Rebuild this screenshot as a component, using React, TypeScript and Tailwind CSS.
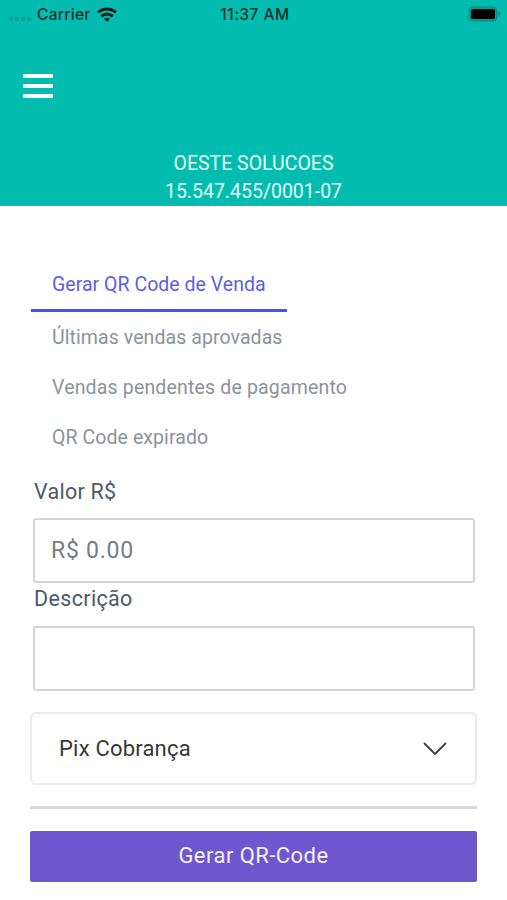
import React, { useState } from 'react';

const TABS = [
  { label: 'Gerar QR Code de Venda', tracking: 'tracking-[0.03px]' },
  { label: 'Últimas vendas aprovadas', tracking: 'tracking-[0.08px]' },
  { label: 'Vendas pendentes de pagamento', tracking: 'tracking-[0.17px]' },
  { label: 'QR Code expirado', tracking: 'tracking-[0.08px]' },
];

const StatusBar: React.FC = () => (
  <div className="grid h-7 grid-cols-[1fr_auto_1fr] items-center pl-[9px] pr-[6px] pt-px font-['Inter',sans-serif] text-[15.5px] text-[#06312e]">
    <div className="flex items-center">
      <div className="mr-[6px] mt-[9px] flex gap-[2px]">
        {[...Array(4)].map((_, i) => (
          <span key={i} className="h-1 w-1 rounded-full bg-[#079c91]" />
        ))}
      </div>
      <span className="font-medium tracking-[0.3px]">Carrier</span>
      <svg className="ml-[6px] h-[15px] w-5" viewBox="0 0 20 15" fill="none" stroke="#032220" strokeWidth="3">
        <path d="M1 5.4C6 .7 14 .7 19 5.4" />
        <path d="M4.3 9.300C7.500 6.200 12.500 6.200 15.700 9.300" />
        <path d="M10 14.800 7 12Q10 9.400 13 12Z" fill="#032220" stroke="none" />
      </svg>
    </div>
    <span className="font-medium tracking-[0.5px]">11:37 AM</span>
    <svg className="h-[17px] w-[33px] justify-self-end" viewBox="0 0 33 17">
      <rect x="1" y="1" width="28" height="14" rx="4" fill="#079b90" stroke="#078b81" />
      <rect x="3" y="3" width="24" height="10" rx="2" fill="#000" />
      <path d="M30.500 5.500v5q2-.8 2-2.500t-2-2.500z" fill="#078b81" />
    </svg>
  </div>
);

const App: React.FC = () => {
  const [active, setActive] = useState(0);

  return (
    <div className="flex h-[900px] w-[507px] flex-col overflow-hidden bg-white font-['Roboto',sans-serif]">
      <header className="h-[206px] shrink-0 bg-[#02bdaf]">
        <StatusBar />
        <button aria-label="Menu" className="ml-[23px] mt-[46px] flex w-[30px] flex-col gap-[6px]">
          <span className="h-1 w-full rounded-[1px] bg-white" />
          <span className="h-1 w-full rounded-[1px] bg-white" />
          <span className="h-1 w-full rounded-[1px] bg-white" />
        </button>
        <div className="mt-[52px] text-center text-[19.5px] leading-[28px] text-[#e4fffb]">
          <p>OESTE SOLUCOES</p>
          <p>15.547.455/0001-07</p>
        </div>
      </header>

      <main className="px-[30px] pt-[52px]">
        <nav className="flex flex-col items-start">
          {TABS.map((tab, i) => (
            <button
              key={tab.label}
              onClick={() => setActive(i)}
              className={`whitespace-nowrap text-left text-[19.5px] ${tab.tracking} ${
                i === active
                  ? 'ml-px h-[54px] w-[256px] border-b-[3px] border-[#4b51e0] pl-[21px] pt-[3px] text-[#5a5fe6]'
                  : 'h-[50px] pl-[22px] pt-[2px] text-[#8b939c]'
              }`}
            >
              {tab.label}
            </button>
          ))}
        </nav>

        <form className="pt-[14px]" onSubmit={(e) => e.preventDefault()}>
          <div className="px-[3px] text-[21.5px] text-[#4b5b69]">
            <label htmlFor="valor" className="flex h-[42px] items-center pb-[10px] pl-px tracking-[0.25px]">Valor R$</label>
            <input
              id="valor"
              placeholder="R$ 0.00"
              className="block h-[65px] w-[442px] rounded-[3px] border-2 border-[#d5d5d5] pl-4 text-[23px] tracking-[0.75px] outline-none placeholder:text-[#777c80]"
            />
            <label htmlFor="descricao" className="flex h-[43px] items-center pb-[10px] pl-px tracking-[0.35px]">Descrição</label>
            <input
              id="descricao"
              className="block h-[65px] w-[442px] rounded-[3px] border-2 border-[#d5d5d5] pl-4 text-[23px] tracking-[0.75px] outline-none"
            />
          </div>

          <button
            type="button"
            className="mt-[21px] flex h-[73px] w-[447px] items-center justify-between rounded-[6px] border-2 border-[#ebebeb] pl-[27px] pr-[28px] text-[22px] tracking-[0.2px] text-[#35383b]"
          >
            <span>Pix Cobrança</span>
            <svg className="h-[14px] w-6" viewBox="0 0 24 14" fill="none" stroke="#3d4043" strokeWidth="1.8" strokeLinecap="round" strokeLinejoin="round">
              <path d="M1.500 1.500 12 12 22.500 1.500" />
            </svg>
          </button>

          <hr className="mt-[21px] w-[447px] border-0 border-t-[3px] border-[#d6d7d8]" />

          <button
            type="submit"
            className="mt-[22px] h-[51px] w-[447px] rounded-[2px] bg-[#6e57ce] pb-[2px] text-[22px] tracking-[0.45px] text-[#f4f0ff]"
          >
            Gerar QR-Code
          </button>
        </form>
      </main>
    </div>
  );
};

export default App;
